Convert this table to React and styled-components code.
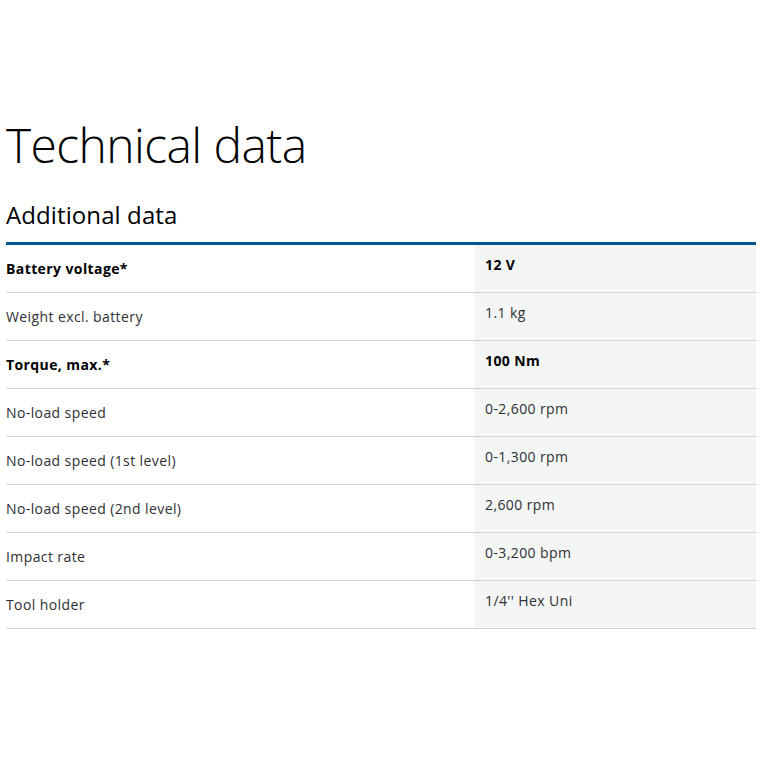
import React from 'react';
import styled, { createGlobalStyle } from 'styled-components';

const Global = createGlobalStyle`
  body {
    margin: 0;
    background: #fff;
    font-family: "Open Sans", "Noto Sans", sans-serif;
    color: #2e3033;
  }
`;

const Page = styled.div`
  padding: 113px 10px 0 6px;
`;

const Title = styled.h1`
  margin: 0;
  font-weight: 300;
  font-size: 48px;
  line-height: 64px;
  letter-spacing: -0.6px;
  color: #000;
`;

const Subtitle = styled.h2`
  margin: 22px 0 0;
  font-weight: 400;
  font-size: 24px;
  line-height: 32px;
  letter-spacing: 0.1px;
  color: #000;
`;

const Table = styled.div`
  margin-top: 11px;
  border-top: 3px solid #005691;
`;

const Row = styled.div`
  display: grid;
  grid-template-columns: 468px 1fr;
  height: 47px;
  border-bottom: 1px solid #d0d4d8;
`;

const Label = styled.div`
  display: flex;
  align-items: center;
  font-size: 14px;
  letter-spacing: 0.4px;
  font-weight: ${p => (p.bold ? 700 : 400)};
  color: ${p => (p.bold ? '#000' : '#2e3033')};
`;

const Value = styled.div`
  background: #f4f5f5;
  padding: 10px 11px 0;
  font-size: 14px;
  line-height: 20px;
  letter-spacing: 0.4px;
  font-weight: ${p => (p.bold ? 700 : 400)};
  color: ${p => (p.bold ? '#000' : '#2e3033')};
`;

const rows = [
  ['Battery voltage*', '12 V', true],
  ['Weight excl. battery', '1.1 kg'],
  ['Torque, max.*', '100 Nm', true],
  ['No-load speed', '0-2,600 rpm'],
  ['No-load speed (1st level)', '0-1,300 rpm'],
  ['No-load speed (2nd level)', '2,600 rpm'],
  ['Impact rate', '0-3,200 bpm'],
  ['Tool holder', "1/4'' Hex Uni"],
];

export default function App() {
  return (
    <Page>
      <Global />
      <Title>Technical data</Title>
      <Subtitle>Additional data</Subtitle>
      <Table>
        {rows.map(([label, value, bold]) => (
          <Row key={label}>
            <Label bold={bold}>{label}</Label>
            <Value bold={bold}>{value}</Value>
          </Row>
        ))}
      </Table>
    </Page>
  );
}
